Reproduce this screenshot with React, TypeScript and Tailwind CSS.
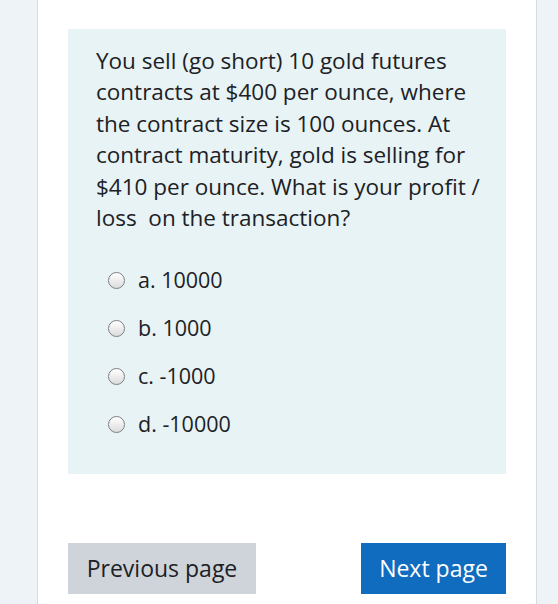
import React from 'react';

const options = ['a. 10000', 'b. 1000', 'c. -1000', 'd. -10000'];

const Radio: React.FC = () => (
  <span className="inline-block w-[17px] h-[17px] rounded-full border-[1.5px] border-[#7d7f81] bg-gradient-to-b from-white to-[#dcdcdc] shrink-0" />
);

const App: React.FC = () => {
  return (
    <div
      className="w-[558px] h-[604px] overflow-hidden bg-[#edf3f6] flex"
      style={{ fontFamily: '"Open Sans", "Liberation Sans", sans-serif' }}
    >
      <div className="ml-[37px] w-[500px] h-full bg-white border-x border-[#d5dbdf] pt-[29px] px-[30px]">
        <div className="bg-[#e7f3f5] h-[445px] pt-[16px] pl-[28px] pr-[24px]">
          <p className="text-[22.5px] leading-[31.4px] text-[#1d2125]">
            You sell (go short) 10 gold futures contracts at $400 per ounce, where the contract size is 100 ounces. At contract maturity, gold is selling for $410 per ounce. What is your profit / loss&nbsp; on the transaction?
          </p>
          <div className="mt-[23px] flex flex-col">
            {options.map((o) => (
              <label key={o} className="h-12 flex items-center gap-[13px] pl-[12px] text-[21.5px] text-[#1d2125]">
                <Radio />
                <span>{o}</span>
              </label>
            ))}
          </div>
        </div>
        <div className="mt-[69px] flex justify-between">
          <button className="h-[51px] w-[188px] bg-[#ced4da] text-[#1d2125] text-[23px]">Previous page</button>
          <button className="h-[51px] w-[145px] bg-[#0f6cbf] text-white text-[23px]">Next page</button>
        </div>
      </div>
    </div>
  );
};

export default App;
